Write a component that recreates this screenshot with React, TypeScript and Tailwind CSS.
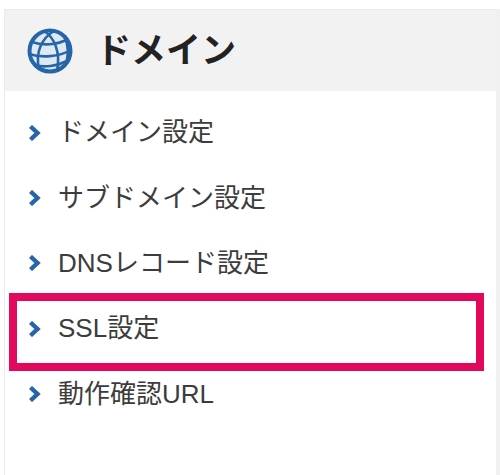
const items = ["ドメイン設定", "サブドメイン設定", "DNSレコード設定", "SSL設定", "動作確認URL"];

function Globe() {
  return (
    <svg width="46" height="46" viewBox="0 0 46 46" className="shrink-0">
      <circle cx="23" cy="23" r="20.5" fill="#dfe9f4" stroke="#2565a8" strokeWidth="4" />
      <g fill="none" stroke="#2565a8" strokeWidth="2.6">
        <path d="M27 3C15 10 8 24 12 41" />
        <path d="M17 3C27 9 34 24 30 43" />
        <path d="M37 8C42 18 42 28 38 38" />
        <path d="M5 14C16 18 30 17 41 11" />
        <path d="M2 26C14 30 32 29 44 22" />
        <path d="M7 37C17 40 30 38 40 33" />
      </g>
    </svg>
  );
}

function Chevron() {
  return (
    <svg width="12" height="16" viewBox="0 0 12 16" className="shrink-0">
      <path d="M1.5 1.5L8.5 8L1.5 14.5" fill="none" stroke="#2565a8" strokeWidth="4.4" />
    </svg>
  );
}

export default function App() {
  return (
    <div className="relative w-[500px] h-[475px] bg-white overflow-hidden font-['Liberation_Sans','Noto_Sans_CJK_JP',sans-serif]">
      <div className="ml-[4px] mt-[9px] h-[466px] border-t-[1px] border-x-[1px] border-[#ebebeb] border-r-[4px] border-r-[#f0f0f0]">
        <div className="flex items-center gap-[23px] h-[81px] pl-[22px] bg-[#f2f2f2]">
          <Globe />
          <h2 className="pt-[2px] text-[35px] font-bold text-[#222]">ドメイン</h2>
        </div>
        <ul className="pt-[9px]">
          {items.map((item) => (
            <li key={item} className="flex items-center gap-[17px] h-[65.4px] pl-[24px] text-[26px] text-[#3c3c3c]">
              <Chevron />
              <span>{item}</span>
            </li>
          ))}
        </ul>
      </div>
      {/* 赤枠 */}
      <div className="absolute left-[9px] top-[293px] w-[475px] h-[78px] border-[8px] border-[#e2085c]" />
    </div>
  );
}
